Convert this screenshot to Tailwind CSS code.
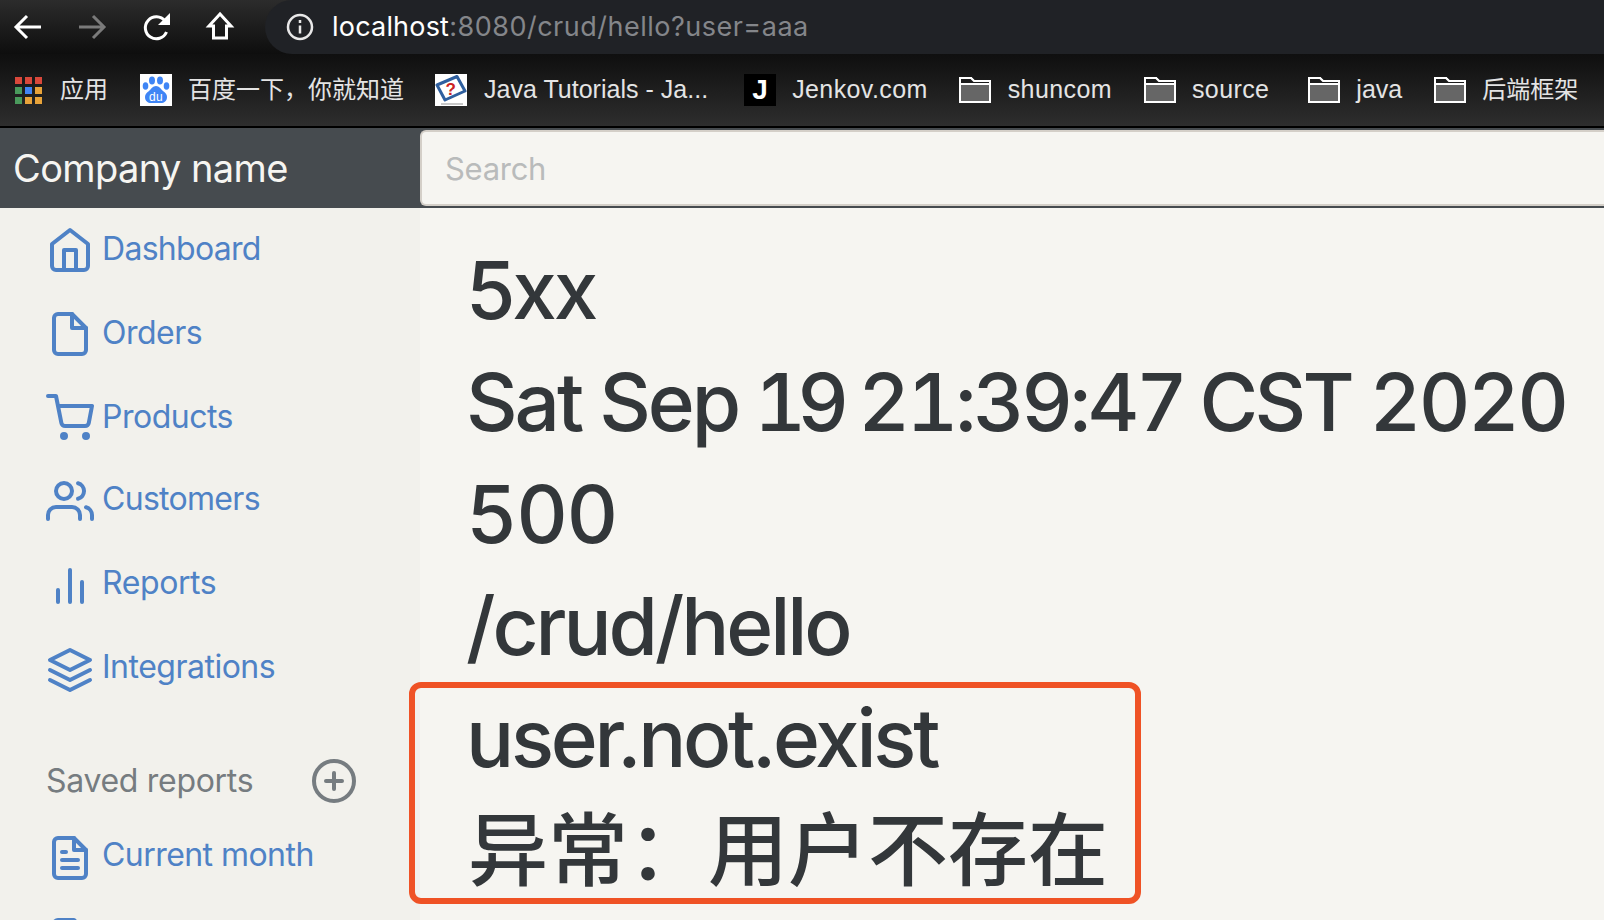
<!DOCTYPE html>
<html lang="zh">
  <head>
    <meta charset="UTF-8" />
    <title>localhost:8080/crud/hello</title>
    <script src="https://cdn.jsdelivr.net/npm/@tailwindcss/browser@4"></script>
  </head>
  <body class="w-[1604px] h-[920px] overflow-hidden bg-[#f6f5f1] font-['Inter','Noto_Sans_CJK_SC',sans-serif]">
    <!-- browser toolbar -->
    <div class="h-[54px] flex items-center bg-gradient-to-b from-[#2c2c2c] to-[#0e0e0e]">
      <div class="w-[265px] flex items-center shrink-0 text-white">
        <svg class="ml-[12px]" width="32" height="32" viewBox="0 0 32 32" fill="none" stroke="currentColor" stroke-width="3"><path d="M29 16H5M15 5 4 16l11 11" /></svg>
        <svg class="ml-[32px] text-[#7a7a7a]" width="32" height="32" viewBox="0 0 32 32" fill="none" stroke="currentColor" stroke-width="3"><path d="M3 16h24M17 5l11 11-11 11" /></svg>
        <svg class="ml-[33px]" width="32" height="32" viewBox="0 0 32 32" fill="none" stroke="currentColor" stroke-width="3"><path d="M25.500 21a11 11 0 1 1-1.500-11" /><path d="M29 2v12H17z" fill="currentColor" stroke="none" /></svg>
        <svg class="ml-[31px]" width="32" height="32" viewBox="0 0 32 32" fill="none" stroke="currentColor" stroke-width="3"><path d="M16 3 5 15h4.500v12h13V15H27z" /></svg>
      </div>
      <div class="flex-1 h-[54px] rounded-l-[28px] bg-[#202226] flex items-center pl-[21px] text-[27px]">
        <svg width="28" height="28" viewBox="0 0 28 28" fill="none" stroke="#e8e8e8" stroke-width="2.5"><circle cx="14" cy="14" r="12" /><path d="M14 12.500v8M14 7v3" /></svg>
        <span class="ml-[18px] text-white tracking-[0.2px]">localhost</span><span class="text-[#84868a] tracking-[0.5px]">:8080/crud/hello?user=aaa</span>
      </div>
    </div>

    <!-- bookmarks -->
    <div class="h-[72px] flex items-center bg-gradient-to-b from-[#0f0f0f] to-[#2e2e2e] text-[#e4e4e4] text-[25px] tracking-[0.4px] font-['Liberation_Sans','Noto_Sans_CJK_SC',sans-serif]">
      <div class="ml-[15px] w-[27px] grid grid-cols-3 gap-[3px]">
        <i class="h-[7px] bg-[#d9483b]"></i><i class="h-[7px] bg-[#d9483b]"></i><i class="h-[7px] bg-[#d9483b]"></i>
        <i class="h-[7px] bg-[#4a9a5c]"></i><i class="h-[7px] bg-[#4285f4]"></i><i class="h-[7px] bg-[#e8a33a]"></i>
        <i class="h-[7px] bg-[#4a9a5c]"></i><i class="h-[7px] bg-[#e8a33a]"></i><i class="h-[7px] bg-[#e8a33a]"></i>
      </div>
      <span class="ml-[18px] text-[24px] tracking-normal">应用</span>
      <svg class="ml-[32px]" width="32" height="32" viewBox="0 0 32 32"><rect width="32" height="32" fill="#fff" /><g fill="#3f85f5"><ellipse cx="5.500" cy="12" rx="2.800" ry="3.800" /><ellipse cx="12" cy="6.500" rx="3" ry="4" /><ellipse cx="20" cy="6.500" rx="3" ry="4" /><ellipse cx="26.500" cy="12" rx="2.800" ry="3.800" /><path d="M16 12c3 0 5 3 7 5 3 2 4 4 4 6 0 4-3 6-6 6H11c-3 0-6-2-6-6 0-2 1-4 4-6 2-2 4-5 7-5z" /></g><text x="16" y="27" font-size="12" fill="#fff" text-anchor="middle" font-family="Liberation Sans">du</text></svg>
      <span class="ml-[16px] text-[24px] tracking-normal">百度一下，你就知道</span>
      <svg class="ml-[31px]" width="32" height="32" viewBox="0 0 32 32"><rect width="32" height="32" fill="#fff" /><path d="M2 11 22 2.500 30 17 10 26z" fill="#fff" stroke="#2f5f9e" stroke-width="3" stroke-linejoin="round" /><path d="M6 30h22" stroke="#c8c8c8" stroke-width="2" /><text x="16" y="21" font-size="17" font-weight="700" fill="#cc2222" text-anchor="middle" font-family="Liberation Sans">?</text></svg>
      <span class="ml-[17px] tracking-[0.02px]">Java Tutorials - Ja...</span>
      <div class="ml-[36px] w-[32px] h-[32px] bg-black flex items-center justify-center text-white font-bold text-[28px]">J</div>
      <span class="ml-[16px]">Jenkov.com</span>
      <svg class="ml-[31px]" width="32" height="26" viewBox="0 0 32 26"><path d="M1 25V1h11l3 3h16v21z" fill="#666" stroke="#fff" stroke-width="2" /><path d="M1 1h11l3 3h16v3H1z" fill="#1c1c1c" stroke="#fff" stroke-width="2" /></svg>
      <span class="ml-[17px]">shuncom</span>
      <svg class="ml-[32px]" width="32" height="26" viewBox="0 0 32 26"><path d="M1 25V1h11l3 3h16v21z" fill="#666" stroke="#fff" stroke-width="2" /><path d="M1 1h11l3 3h16v3H1z" fill="#1c1c1c" stroke="#fff" stroke-width="2" /></svg>
      <span class="ml-[16px]">source</span>
      <svg class="ml-[39px]" width="32" height="26" viewBox="0 0 32 26"><path d="M1 25V1h11l3 3h16v21z" fill="#666" stroke="#fff" stroke-width="2" /><path d="M1 1h11l3 3h16v3H1z" fill="#1c1c1c" stroke="#fff" stroke-width="2" /></svg>
      <span class="ml-[16px] tracking-normal">java</span>
      <svg class="ml-[32px]" width="32" height="26" viewBox="0 0 32 26"><path d="M1 25V1h11l3 3h16v21z" fill="#666" stroke="#fff" stroke-width="2" /><path d="M1 1h11l3 3h16v3H1z" fill="#1c1c1c" stroke="#fff" stroke-width="2" /></svg>
      <span class="ml-[16px] text-[24px] tracking-normal">后端框架</span>
    </div>

    <!-- app navbar -->
    <div class="h-[82px] border-t-2 border-black bg-[#464b4f] flex">
      <div class="w-[420px] shrink-0 pl-[13px] flex items-center text-[38px] tracking-[-0.6px] text-[#f6f5f1]">Company name</div>
      <div class="flex-1 my-[2px] bg-[#f6f5f1] border-y-2 border-l-2 border-[#d4cfc8] rounded-l-[6px] pl-[23px] flex items-center text-[31px] tracking-[-0.3px] text-[#b9bbbb]"><span class="mt-[2px]">Search</span></div>
    </div>

    <div class="flex relative">
      <!-- sidebar -->
      <div class="w-[420px] h-[712px] shrink-0 bg-[#f2f1ec] text-[#4f82c6] text-[32px] tracking-[-0.5px] overflow-hidden">
        <div class="flex items-center h-[84px]">
          <svg class="ml-[46px]" width="48" height="48" viewBox="0 0 24 24" fill="none" stroke="currentColor" stroke-width="2" stroke-linecap="round" stroke-linejoin="round"><path d="M3 9l9-7 9 7v11a2 2 0 0 1-2 2H5a2 2 0 0 1-2-2z" /><polyline points="9 22 9 12 15 12 15 22" /></svg>
          <span class="ml-[8px] mb-[2px] tracking-[-0.7px]">Dashboard</span>
        </div>
        <div class="flex items-center h-[84px]">
          <svg class="ml-[46px]" width="48" height="48" viewBox="0 0 24 24" fill="none" stroke="currentColor" stroke-width="2" stroke-linecap="round" stroke-linejoin="round"><path d="M13 2H6a2 2 0 0 0-2 2v16a2 2 0 0 0 2 2h12a2 2 0 0 0 2-2V9z" /><polyline points="13 2 13 9 20 9" /></svg>
          <span class="ml-[8px] mb-[2px]">Orders</span>
        </div>
        <div class="flex items-center h-[84px]">
          <svg class="ml-[46px]" width="48" height="48" viewBox="0 0 24 24" fill="none" stroke="currentColor" stroke-width="2" stroke-linecap="round" stroke-linejoin="round"><circle cx="9" cy="21" r="1" /><circle cx="20" cy="21" r="1" /><path d="M1 1h4l2.680 13.390a2 2 0 0 0 2 1.610h9.720a2 2 0 0 0 2-1.610L23 6H6" /></svg>
          <span class="ml-[8px] mb-[2px]">Products</span>
        </div>
        <div class="flex items-center h-[84px]">
          <svg class="ml-[46px] mb-[2px]" width="48" height="48" viewBox="0 0 24 24" fill="none" stroke="currentColor" stroke-width="2" stroke-linecap="round" stroke-linejoin="round"><path d="M17 21v-2a4 4 0 0 0-4-4H5a4 4 0 0 0-4 4v2" /><circle cx="9" cy="7" r="4" /><path d="M23 21v-2a4 4 0 0 0-3-3.870" /><path d="M16 3.130a4 4 0 0 1 0 7.750" /></svg>
          <span class="ml-[8px] mb-[6px] tracking-[-0.7px]">Customers</span>
        </div>
        <div class="flex items-center h-[84px]">
          <svg class="ml-[46px]" width="48" height="48" viewBox="0 0 24 24" fill="none" stroke="currentColor" stroke-width="2" stroke-linecap="round" stroke-linejoin="round"><line x1="18" y1="20" x2="18" y2="10" /><line x1="12" y1="20" x2="12" y2="4" /><line x1="6" y1="20" x2="6" y2="14" /></svg>
          <span class="ml-[8px] mb-[6px] tracking-[-0.4px]">Reports</span>
        </div>
        <div class="flex items-center h-[84px]">
          <svg class="ml-[46px]" width="48" height="48" viewBox="0 0 24 24" fill="none" stroke="currentColor" stroke-width="2" stroke-linecap="round" stroke-linejoin="round"><polygon points="12 2 2 7 12 12 22 7 12 2" /><polyline points="2 17 12 22 22 17" /><polyline points="2 12 12 17 22 12" /></svg>
          <span class="ml-[8px] mb-[6px]">Integrations</span>
        </div>
        <div class="flex items-center h-[60px] mt-[39px] pl-[46px] text-[#767c80]">
          <span class="w-[264px] tracking-[-0.3px]">Saved reports</span>
          <svg width="48" height="48" viewBox="0 0 24 24" fill="none" stroke="currentColor" stroke-width="2" stroke-linecap="round" stroke-linejoin="round"><circle cx="12" cy="12" r="10" /><line x1="12" y1="8" x2="12" y2="16" /><line x1="8" y1="12" x2="16" y2="12" /></svg>
        </div>
        <div class="flex items-center h-[84px] mt-[5px]">
          <svg class="ml-[46px]" width="48" height="48" viewBox="0 0 24 24" fill="none" stroke="currentColor" stroke-width="2" stroke-linecap="round" stroke-linejoin="round"><path d="M14 2H6a2 2 0 0 0-2 2v16a2 2 0 0 0 2 2h12a2 2 0 0 0 2-2V8z" /><polyline points="14 2 14 8 20 8" /><line x1="16" y1="13" x2="8" y2="13" /><line x1="16" y1="17" x2="8" y2="17" /><polyline points="10 9 9 9 8 9" /></svg>
          <span class="ml-[8px] mb-[6px] tracking-[-0.55px]">Current month</span>
        </div>
        <div class="flex items-center h-[80px]">
          <svg class="ml-[46px]" width="48" height="48" viewBox="0 0 24 24" fill="none" stroke="currentColor" stroke-width="2" stroke-linecap="round" stroke-linejoin="round"><path d="M14 2H6a2 2 0 0 0-2 2v16a2 2 0 0 0 2 2h12a2 2 0 0 0 2-2V8z" /></svg>
        </div>
      </div>

      <!-- main -->
      <div class="flex-1 pl-[46px] pt-[26px] text-[80px] leading-[112px] font-medium tracking-[-3.1px] text-[#33373a] whitespace-nowrap">
        <div>5xx</div>
        <div>Sat Sep <span class="tabular-nums tracking-[-9px] ml-[-2px]">19</span> <span class="tabular-nums tracking-[-3.5px] mr-[-3px]">21:39:47</span> <span class="tracking-[-3.6px]">CST</span> <span class="tabular-nums tracking-[-2.6px]">2020</span></div>
        <div class="tabular-nums tracking-[-1.6px]">500</div>
        <div>/crud/hello</div>
        <div class="tracking-[-3.25px]">user.not.exist</div>
        <div class="tracking-normal ml-[2px]">异常：用户不存在</div>
      </div>

      <!-- red annotation -->
      <div class="absolute left-[409px] top-[474px] w-[732px] h-[222px] border-[6px] border-[#ef5225] rounded-[12px]"></div>
    </div>
  </body>
</html>
